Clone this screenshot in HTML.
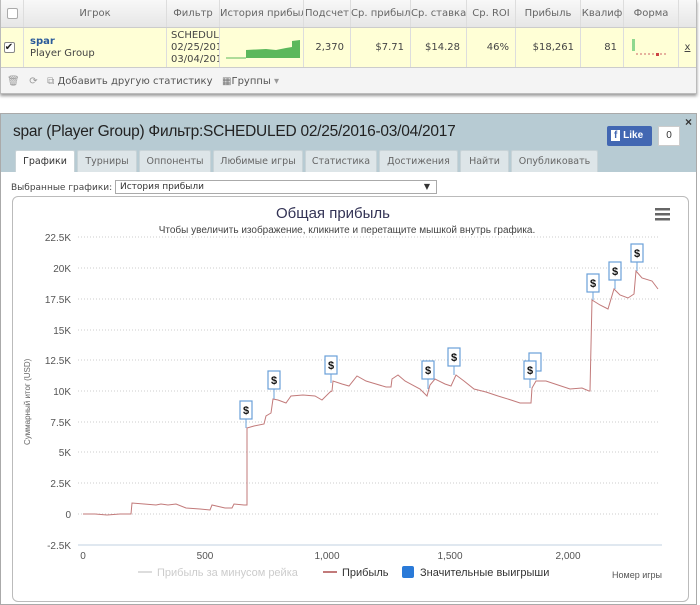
<!DOCTYPE html>
<html><head><meta charset="utf-8"><style>
*{box-sizing:border-box;margin:0;padding:0}
body{width:700px;height:605px;background:#fff;font-family:"Liberation Sans","DejaVu Sans",sans-serif;position:relative;overflow:hidden;color:#333}
.abs{position:absolute}
.top{left:0;top:0;width:697px;height:94px;border:1px solid #bbb;border-top:none;box-shadow:0 2px 3px #999;background:#f4f4f4}
.hdr{left:0;top:0;width:695px;height:28px;background:linear-gradient(#f8f8f8,#e6e6e6);border-bottom:1px solid #ccc}
.row{left:0;top:28px;width:695px;height:40px;background:#ffffd6;border-bottom:1px solid #ccc}
.c{position:absolute;top:0;height:100%;border-right:1px solid #ddd;font-size:10px;font-family:"DejaVu Sans",sans-serif;color:#555}
.hdr .c{line-height:28px;text-align:center;color:#666}
.row .c{line-height:40px;text-align:right;padding-right:6px;color:#444}
.bot{left:0;top:113px;width:697px;height:492px;border:1px solid #aaa;background:#fff}
.bh{left:0;top:0;width:695px;height:58px;background:#b7cbd3}
.tab{position:absolute;top:36px;height:22px;background:#dde5e8;border:1px solid #c8d3d7;border-bottom:none;font-size:9.5px;font-family:"DejaVu Sans",sans-serif;color:#666;text-align:center;line-height:21px;border-radius:2px 2px 0 0}
</style></head><body>
<div class="abs top">
 <div class="abs hdr">
  <div class="c" style="left:0;width:23px"><div style="margin:8px auto;width:11px;height:11px;border:1px solid #aaa;background:#fff;border-radius:2px"></div></div>
  <div class="c" style="left:23px;width:143px">Игрок</div>
  <div class="c" style="left:166px;width:53px">Фильтр</div>
  <div class="c" style="left:219px;width:84px;white-space:nowrap;overflow:hidden">История прибыли</div>
  <div class="c" style="left:303px;width:47px">Подсчет</div>
  <div class="c" style="left:350px;width:60px;white-space:nowrap;overflow:hidden">Ср. прибыль</div>
  <div class="c" style="left:410px;width:56px;white-space:nowrap;overflow:hidden">Ср. ставка</div>
  <div class="c" style="left:466px;width:49px">Ср. ROI</div>
  <div class="c" style="left:515px;width:65px">Прибыль</div>
  <div class="c" style="left:580px;width:43px;white-space:nowrap;overflow:hidden">Квалиф</div>
  <div class="c" style="left:623px;width:55px">Форма</div>
 </div>
 <div class="abs row">
  <div class="c" style="left:0;width:23px"><div style="margin:14px auto;width:11px;height:11px;border:1px solid #888;background:#fff;border-radius:2px;font-size:10px;line-height:9px;text-align:center;color:#222">✔</div></div>
  <div class="c" style="left:23px;width:143px;text-align:left;line-height:12px;padding:8px 0 0 6px"><b style="color:#2a5a9a">spar</b><br>Player Group</div>
  <div class="c" style="left:166px;width:53px;text-align:left;line-height:12px;padding:2px 0 0 4px;overflow:hidden;white-space:nowrap">SCHEDULED<br>02/25/2016<br>03/04/2017</div>
  <div class="c" style="left:219px;width:84px"><svg class="abs" style="left:6px;top:10px" width="74" height="22"><path d="M5 20H20V12L40 11L50 12L60 10L66 9V3L74 2V20Z" fill="#5cb85c"/><path d="M0 20H20" stroke="#5cb85c"/></svg></div>
  <div class="c" style="left:303px;width:47px">2,370</div>
  <div class="c" style="left:350px;width:60px">$7.71</div>
  <div class="c" style="left:410px;width:56px">$14.28</div>
  <div class="c" style="left:466px;width:49px">46%</div>
  <div class="c" style="left:515px;width:65px">$18,261</div>
  <div class="c" style="left:580px;width:43px">81</div>
  <div class="c" style="left:623px;width:55px"><svg class="abs" style="left:6px;top:11px" width="46" height="18"><rect x="2" y="0" width="3" height="12" fill="#8fd88f"/><path d="M6 15H38" stroke="#c66" stroke-dasharray="2 2"/><rect x="26" y="14" width="3" height="3" fill="#c44"/></svg></div>
  <div class="c" style="left:678px;width:17px;text-align:center;padding:0;border:none;text-decoration:underline">x</div>
 </div>
 <div class="abs" style="left:6px;top:76px;font-size:10px;font-family:'DejaVu Sans',sans-serif;color:#555;white-space:nowrap"><span style="color:#999">🗑 &nbsp; ⟳ &nbsp; ⧉</span> Добавить другую статистику &nbsp; <span style="color:#777">▦</span>Группы <span style="color:#999">▾</span></div>
</div>
<div class="abs bot">
 <div class="abs bh"></div>
 <div class="abs" style="left:12px;top:9px;font-size:15.5px;letter-spacing:-0.25px;color:#222;white-space:nowrap">spar (Player Group) Фильтр:SCHEDULED 02/25/2016-03/04/2017</div>
 <div class="abs" style="left:606px;top:12px;width:45px;height:20px;background:#4267b2;border-radius:2px;color:#fff;font-size:10px;font-weight:bold;line-height:20px;padding-left:4px"><span style="background:#fff;color:#4267b2;padding:0 3px">f</span> Like</div>
 <div class="abs" style="left:657px;top:12px;width:22px;height:20px;border:1px solid #ccc;background:#fff;font-size:10px;text-align:center;line-height:18px">0</div>
 <div class="abs" style="left:684px;top:1px;font-size:12px;font-weight:bold">×</div>
 <div class="tab" style="left:14px;width:60px;background:#fff;color:#333">Графики</div>
 <div class="tab" style="left:76px;width:60px">Турниры</div>
 <div class="tab" style="left:138px;width:72px">Оппоненты</div>
 <div class="tab" style="left:212px;width:90px">Любимые игры</div>
 <div class="tab" style="left:304px;width:72px">Статистика</div>
 <div class="tab" style="left:378px;width:79px">Достижения</div>
 <div class="tab" style="left:459px;width:49px">Найти</div>
 <div class="tab" style="left:510px;width:87px">Опубликовать</div>
 <div class="abs" style="left:10px;top:69px;font-size:9px;font-family:'DejaVu Sans',sans-serif;color:#444">Выбранные графики:</div>
 <div class="abs" style="left:114px;top:66px;width:322px;height:14px;border:1px solid #aaa;font-size:9px;font-family:'DejaVu Sans',sans-serif;line-height:12px;padding-left:4px">История прибыли<span style="position:absolute;right:6px;font-size:8px">▼</span></div>
 <div class="abs" style="left:11px;top:82px;width:677px;height:406px;border:1px solid #bbb;border-radius:6px"></div>
</div>
<svg class="abs" style="left:0;top:0" width="700" height="605" font-family="Liberation Sans,DejaVu Sans,sans-serif">
 <text x="333" y="218" font-size="15" fill="#335" text-anchor="middle">Общая прибыль</text>
 <text x="347" y="233" font-size="10" fill="#444" text-anchor="middle">Чтобы увеличить изображение, кликните и перетащите мышкой внутрь графика.</text>
 <g fill="#666"><rect x="655" y="208" width="15" height="2.5"/><rect x="655" y="213" width="15" height="2.5"/><rect x="655" y="218" width="15" height="2.5"/></g>
 <g stroke="#ccc" stroke-dasharray="1 2">
  <path d="M78 237H660M78 268H660M78 299H660M78 330H660M78 360H660M78 391H660M78 422H660M78 452H660M78 483H660M78 514H660"/>
 </g>
 <path d="M78 545H662" stroke="#c0d0e0"/>
 <g font-size="10" fill="#555" text-anchor="end">
  <text x="71" y="241">22.5K</text><text x="71" y="272">20K</text><text x="71" y="303">17.5K</text><text x="71" y="334">15K</text><text x="71" y="364">12.5K</text><text x="71" y="395">10K</text><text x="71" y="426">7.5K</text><text x="71" y="456">5K</text><text x="71" y="487">2.5K</text><text x="71" y="518">0</text><text x="71" y="549">-2.5K</text>
 </g>
 <g font-size="10" fill="#555" text-anchor="middle">
  <text x="83" y="559">0</text><text x="205" y="559">500</text><text x="327" y="559">1,000</text><text x="450" y="559">1,500</text><text x="568" y="559">2,000</text>
 </g>
 <text transform="translate(30,445) rotate(-90)" font-size="8" fill="#666">Суммарный итог (USD)</text>
 <path fill="none" stroke="#c27a7a" stroke-width="1" d="M83 514L95 514L107 515L120 514L131 514L132 503L144 504L156 505L161 504L168 505L176 504L186 508L200 509L210 510L212 505L225 508L232 508L234 504L244 505L247 505L247 428L254 426L264 424L266 416L271 413L273 399L278 400L286 403L291 396L303 395L315 396L322 400L330 392L332 391L333 381L342 384L349 386L357 376L366 381L376 384L386 387L391 387L392 379L398 375L405 381L420 389L427 396L430 385L435 379L445 384L451 386L456 375L464 381L474 389L486 392L498 396L511 400L520 403L531 403L532 388L536 381L546 381L558 385L570 389L582 388L589 391L590 391L592 300L600 305L608 309L614 289L620 295L628 298L634 294L636 271L642 278L652 281L658 289"/>
 <g font-size="11" font-weight="bold" fill="#111" text-anchor="middle">
  <g stroke="#6aa0d8"><path d="M246 419V428M274 389V399M331 374V383M428 379V389M454 366V375M530 379V388M593 292V300M615 280V289M637 262V271"/></g>
  <g fill="#fff" stroke="#6aa0d8" stroke-width="1.2">
   <rect x="240" y="401" width="12" height="18"/><rect x="268" y="371" width="12" height="18"/><rect x="325" y="356" width="12" height="18"/><rect x="422" y="361" width="12" height="18"/><rect x="448" y="348" width="12" height="18"/><rect x="529" y="353" width="12" height="18"/><rect x="524" y="361" width="12" height="18"/><rect x="587" y="274" width="12" height="18"/><rect x="609" y="262" width="12" height="18"/><rect x="631" y="244" width="12" height="18"/>
  </g>
  <text x="246" y="414">$</text><text x="274" y="384">$</text><text x="331" y="369">$</text><text x="428" y="374">$</text><text x="454" y="361">$</text><text x="530" y="374">$</text><text x="593" y="287">$</text><text x="615" y="275">$</text><text x="637" y="257">$</text>
 </g>
 <path d="M138 572H152" stroke="#ddd" stroke-width="2"/>
 <text x="157" y="576" font-size="11" fill="#ccc">Прибыль за минусом рейка</text>
 <path d="M323 572H337" stroke="#c27a7a" stroke-width="2"/>
 <text x="342" y="576" font-size="11" fill="#333">Прибыль</text>
 <rect x="402" y="566" width="12" height="12" rx="2" fill="#2a7ad8"/>
 <text x="420" y="576" font-size="11" fill="#333">Значительные выигрыши</text>
 <text x="612" y="578" font-size="9" fill="#555">Номер игры</text>
</svg>
</body></html>
